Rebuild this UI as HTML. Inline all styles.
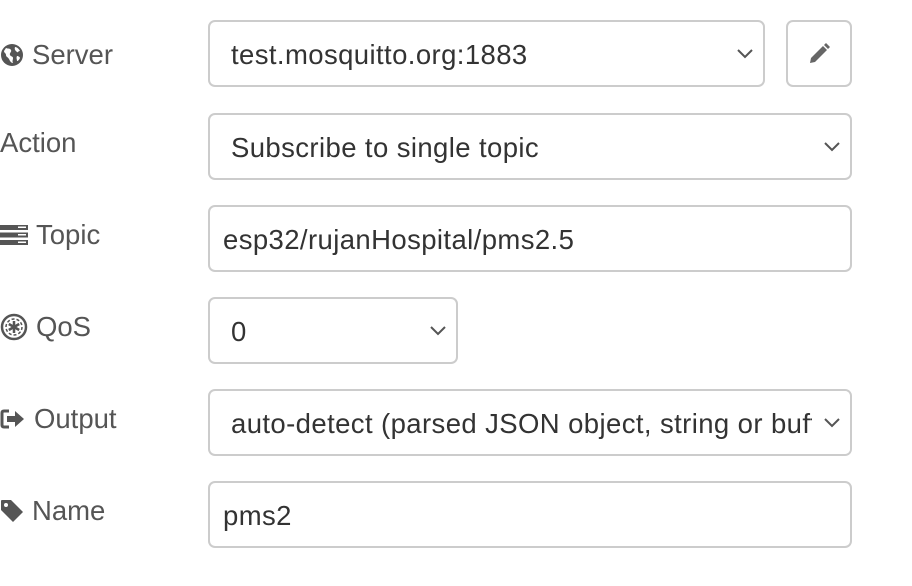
<!DOCTYPE html>
<html><head><style>
body{margin:0;width:912px;height:586px;background:#fff;font-family:"Liberation Sans",Arial,sans-serif;position:relative;overflow:hidden}
.l{position:absolute;left:0;font-size:27.5px;color:#555;display:flex;align-items:center;height:40px}
.l svg{margin-right:8px}
.b{position:absolute;box-sizing:border-box;border:2px solid #ccc;border-radius:7px;font-size:27.5px;letter-spacing:0.4px;color:#333;display:flex;align-items:center;height:67px;white-space:nowrap;overflow:hidden;padding-top:3px}
.s{padding-left:21px}
.i{padding-left:13px}
.c{position:absolute;right:10px;top:27px}
</style></head><body>
<div class="l" style="top:35px"><svg width="24" height="24" viewBox="0 0 24 24"><circle cx="12" cy="12" r="11" fill="#555"/><path d="M6 5c2 1 4 0 5 2s-2 3-1 5 3 1 3 3-1 3 0 5c-2 0-3-2-4-4s-3-2-3-4-2-2-2-4zM15 4c2 0 4 2 5 4-2 0-2 2-3 1s-3-2-2-5zM17 13c1 0 3 1 3 2-1 2-2 3-3 3 0-2-1-3 0-5z" fill="#fff"/></svg>Server</div>
<div class="b s" style="left:208px;top:20px;width:557px">test.mosquitto.org:1883<svg class="c" width="16" height="10"><path d="M1 1l7 7 7-7" stroke="#555" stroke-width="2" fill="none"/></svg></div>
<div class="b" style="left:786px;top:20px;width:66px;justify-content:center;padding-top:0"><svg width="24" height="24" viewBox="0 0 24 24"><path d="M3 21l1-5L16 4l4 4L8 20z" fill="#666"/><path d="M17 3l2-2 4 4-2 2z" fill="#666"/></svg></div>
<div class="l" style="top:123px">Action</div>
<div class="b s" style="left:208px;top:113px;width:644px">Subscribe to single topic<svg class="c" width="16" height="10"><path d="M1 1l7 7 7-7" stroke="#555" stroke-width="2" fill="none"/></svg></div>
<div class="l" style="top:215px"><svg width="28" height="22" viewBox="0 0 28 22"><rect x="0" y="1" width="28" height="5" fill="#555"/><rect x="0" y="8.5" width="28" height="5" fill="#555"/><rect x="0" y="16" width="28" height="5" fill="#555"/><rect x="18" y="2.5" width="8" height="1.5" fill="#fff"/><rect x="18" y="10" width="8" height="1.5" fill="#fff"/><rect x="18" y="17.5" width="8" height="1.5" fill="#fff"/></svg>Topic</div>
<div class="b i" style="left:208px;top:205px;width:644px">esp32/rujanHospital/pms2.5</div>
<div class="l" style="top:307px"><svg width="28" height="28" viewBox="0 0 28 28"><circle cx="14" cy="14" r="12" fill="none" stroke="#555" stroke-width="2.5"/><circle cx="14" cy="14" r="8" fill="none" stroke="#555" stroke-width="1.5" stroke-dasharray="3 2"/><path d="M14 8v12M8.8 11l10.4 6M8.8 17l10.4-6" stroke="#555" stroke-width="2.5"/></svg>QoS</div>
<div class="b i" style="left:208px;top:297px;width:250px;padding-left:21px">0<svg class="c" width="16" height="10"><path d="M1 1l7 7 7-7" stroke="#555" stroke-width="2" fill="none"/></svg></div>
<div class="l" style="top:399px"><svg width="26" height="22" viewBox="0 0 26 22"><path d="M9 3H4Q2 3 2 5v12q0 2 2 2h5" stroke="#555" stroke-width="3" fill="none"/><path d="M7 8h8V3l9 8-9 8v-5H7z" fill="#555"/></svg>Output</div>
<div class="b s" style="left:208px;top:389px;width:644px">auto-detect (parsed JSON object, string or buffer)<div style="position:absolute;right:0;top:0;width:38px;height:63px;background:#fff"></div><svg class="c" width="16" height="10"><path d="M1 1l7 7 7-7" stroke="#555" stroke-width="2" fill="none"/></svg></div>
<div class="l" style="top:491px"><svg width="24" height="24" viewBox="0 0 24 24"><path d="M1 2Q1 1 2 1h9l12 12-10 10L1 11z" fill="#555"/><circle cx="6" cy="6" r="2" fill="#fff"/></svg>Name</div>
<div class="b i" style="left:208px;top:481px;width:644px">pms2</div>
</body></html>
